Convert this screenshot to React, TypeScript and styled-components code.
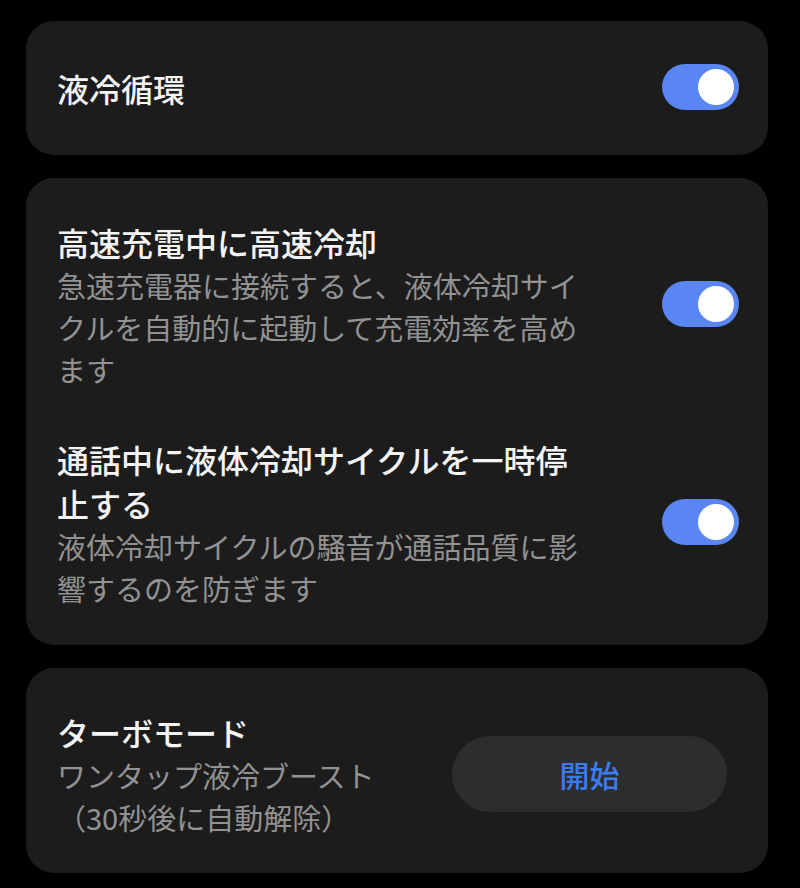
import React, { FC, useState } from "react";
import styled, { createGlobalStyle } from "styled-components";

const GlobalStyle = createGlobalStyle`
  html, body {
    margin: 0;
    padding: 0;
    background: #000;
  }
  body {
    font-family: "Noto Sans CJK JP", "Noto Sans", sans-serif;
  }
`;

const Page = styled.div`
  width: 800px;
  height: 888px;
  box-sizing: border-box;
  padding: 21px 32px 0 26px;
  display: flex;
  flex-direction: column;
  gap: 23px;
  background: #000;
  overflow: hidden;
`;

const Card = styled.section<{ pad?: string }>`
  background: #1c1c1c;
  border-radius: 28px;
  padding: ${({ pad }) => pad || "0 29px 0 31px"};
  display: flex;
  flex-direction: column;
  gap: 47px;
`;

const Row = styled.div<{ minHeight?: number }>`
  display: flex;
  align-items: center;
  justify-content: space-between;
  min-height: ${({ minHeight }) => (minHeight ? `${minHeight}px` : "auto")};
`;

const TextCol = styled.div<{ width?: number }>`
  width: ${({ width }) => width || 530}px;
  display: flex;
  flex-direction: column;
`;

const Title = styled.div`
  color: #f4f4f4;
  font-size: 32px;
  font-weight: 500;
  line-height: 44px;
`;

const Subtitle = styled.div`
  color: #929292;
  font-size: 29px;
  font-weight: 400;
  line-height: 42px;
`;

const Track = styled.button<{ on: boolean }>`
  position: relative;
  width: 77px;
  height: 46px;
  border: none;
  padding: 0;
  border-radius: 23px;
  background: ${({ on }) => (on ? "#5a86f3" : "#555")};
  cursor: pointer;
  flex-shrink: 0;
  margin-top: -2px;
`;

const Knob = styled.span<{ on: boolean }>`
  position: absolute;
  top: 5px;
  left: ${({ on }) => (on ? "36px" : "5px")};
  width: 36px;
  height: 36px;
  border-radius: 50%;
  background: #fff;
`;

const StartButton = styled.button`
  width: 275px;
  height: 76px;
  border: none;
  border-radius: 38px;
  background: #2d2d2d;
  color: #3b7cf0;
  font-family: "Noto Sans CJK JP", sans-serif;
  font-size: 30px;
  font-weight: 500;
  margin-right: 12px;
  cursor: pointer;
`;

const Toggle: FC<{ initial?: boolean }> = ({ initial = true }) => {
  const [on, setOn] = useState(initial);
  return (
    <Track on={on} onClick={() => setOn(!on)} aria-pressed={on}>
      <Knob on={on} />
    </Track>
  );
};

const App: FC = () => (
  <>
    <GlobalStyle />
    <Page>
      <Card>
        <Row minHeight={134}>
          <Title>液冷循環</Title>
          <Toggle />
        </Row>
      </Card>

      <Card pad="42px 29px 36px 31px">
        <Row>
          <TextCol>
            <Title>高速充電中に高速冷却</Title>
            <Subtitle>
              急速充電器に接続すると、液体冷却サイクルを自動的に起動して充電効率を高めます
            </Subtitle>
          </TextCol>
          <Toggle />
        </Row>
        <Row>
          <TextCol>
            <Title>通話中に液体冷却サイクルを一時停止する</Title>
            <Subtitle>液体冷却サイクルの騒音が通話品質に影響するのを防ぎます</Subtitle>
          </TextCol>
          <Toggle />
        </Row>
      </Card>

      <Card pad="42px 29px 35px 31px">
        <Row>
          <TextCol width={335}>
            <Title>ターボモード</Title>
            <Subtitle>ワンタップ液冷ブースト（30秒後に自動解除）</Subtitle>
          </TextCol>
          <StartButton>開始</StartButton>
        </Row>
      </Card>
    </Page>
  </>
);

export default App;
